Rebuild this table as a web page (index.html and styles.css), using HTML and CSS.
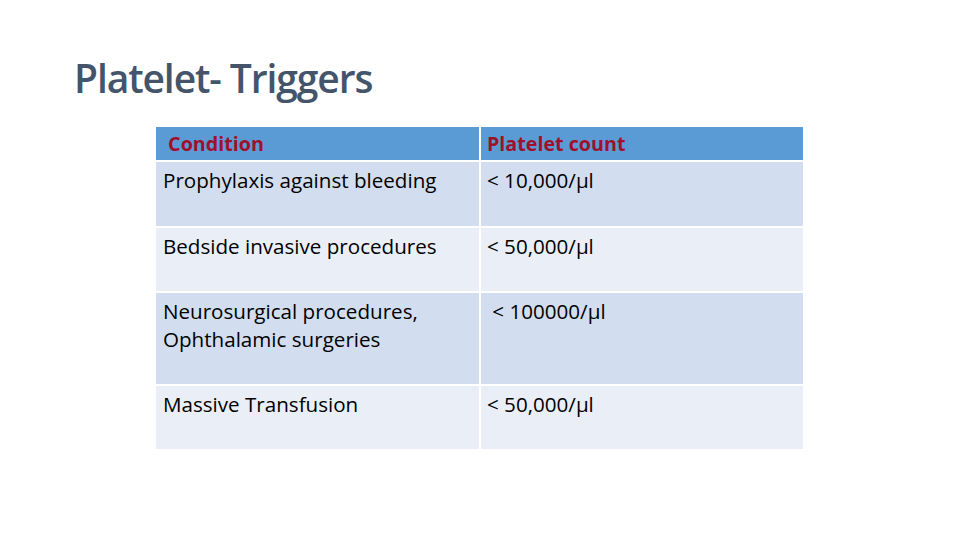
FILE: index.html
```html
<!DOCTYPE html>
<html>
<head>
<meta charset="utf-8">
<link rel="stylesheet" href="styles.css">
</head>
<body>
<div class="slide">
  <h1 class="title">Platelet- Triggers</h1>
  <table class="triggers">
    <tr class="head">
      <th class="c1">&nbsp;Condition</th>
      <th class="c2">Platelet count</th>
    </tr>
    <tr class="odd r-a">
      <td>Prophylaxis against bleeding</td>
      <td>&lt; 10,000/µl</td>
    </tr>
    <tr class="even r-b">
      <td>Bedside invasive procedures</td>
      <td>&lt; 50,000/µl</td>
    </tr>
    <tr class="odd r-c">
      <td>Neurosurgical procedures,<br>Ophthalamic surgeries</td>
      <td>&nbsp;&lt; 100000/µl</td>
    </tr>
    <tr class="even r-d">
      <td>Massive Transfusion</td>
      <td>&lt; 50,000/µl</td>
    </tr>
  </table>
</div>
</body>
</html>
```
FILE: styles.css
```css
html, body {
  margin: 0;
  padding: 0;
  background: #ffffff;
}
.slide {
  width: 960px;
  height: 540px;
  position: relative;
  overflow: hidden;
  padding-top: 52px;
  box-sizing: border-box;
}
.title {
  margin: 0 0 0 74px;
  font-family: "Open Sans", "Liberation Sans", sans-serif;
  font-weight: 600;
  font-size: 39px;
  line-height: 52px;
  color: #44546a;
  letter-spacing: -1.1px;
  height: 73px;
}
.triggers {
  margin-left: 154px;
  border-collapse: separate;
  border-spacing: 2px;
  font-family: "Open Sans", "Liberation Sans", sans-serif;
  font-size: 20.6px;
  color: #000000;
}
.triggers th,
.triggers td {
  width: 323px;
  padding: 0 0 0 7px;
  text-align: left;
  vertical-align: top;
  line-height: 28px;
  box-sizing: border-box;
}
.triggers td + td,
.triggers th + th {
  width: 322px;
  padding-left: 6px;
}
.head th {
  background: #5b9bd5;
  color: #a0102a;
  font-weight: 700;
  font-size: 19.7px;
  height: 33px;
  padding-top: 3px;
}
.head th.c1 { padding-left: 7px; }
.odd td { background: #d2deef; }
.even td { background: #eaeff7; }
.triggers td { padding-top: 4px; }
.r-a td { height: 64px; }
.r-b td { height: 63px; }
.r-c td { height: 91px; }
.r-d td { height: 63px; }
```
